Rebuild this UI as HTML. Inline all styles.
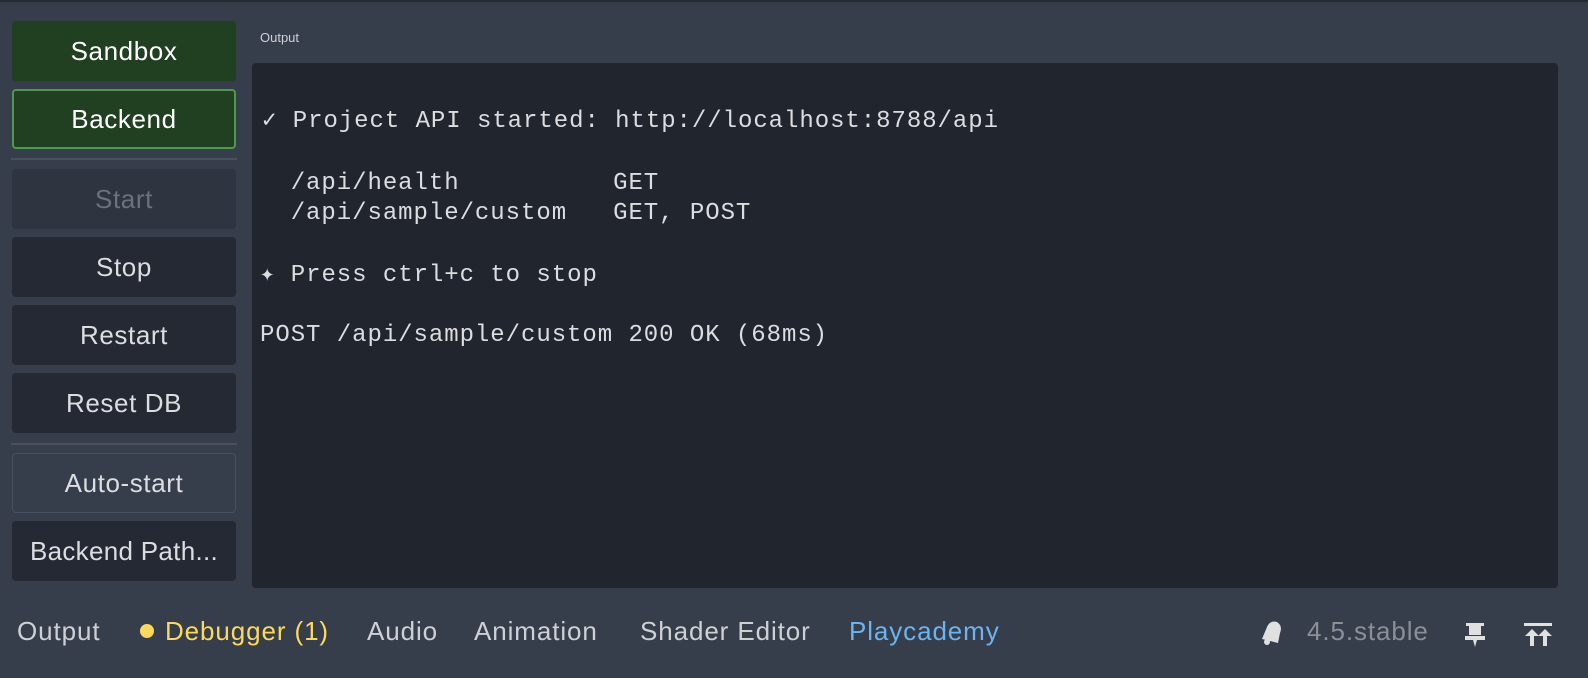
<!DOCTYPE html>
<html><head><meta charset="utf-8"><style>
*{margin:0;padding:0;box-sizing:border-box}
body{width:1588px;height:678px;background:#363d4b;font-family:"Liberation Sans",sans-serif;position:relative;overflow:hidden}
.top{position:absolute;left:0;top:0;width:1588px;height:2px;background:#262a33}
.btn{position:absolute;left:12px;width:224px;height:60px;border-radius:4px;background:#242933;color:#dcdde0;font-size:26px;letter-spacing:0.6px;display:flex;align-items:center;justify-content:center}
.g{background:#213f21;color:#fff}
.sep{position:absolute;left:11px;width:226px;height:2px;background:#4a505c}
.out{position:absolute;left:252px;top:63px;width:1306px;height:525px;background:#21252e;border-radius:4px}
.mono{position:absolute;font-family:"Liberation Mono",monospace;font-size:24px;letter-spacing:0.95px;color:#dcdde0;white-space:pre;line-height:30px}
.tab{position:absolute;top:616px;font-size:26px;letter-spacing:0.9px;color:#cfd0d4;white-space:nowrap}
</style></head><body>
<div class="top"></div>
<div class="btn g" style="top:21px">Sandbox</div>
<div class="btn g" style="top:89px;border:2px solid #4f9a4a">Backend</div>
<div class="sep" style="top:158px"></div>
<div class="btn" style="top:169px;background:#2f3441;color:#6d717a">Start</div>
<div class="btn" style="top:237px">Stop</div>
<div class="btn" style="top:305px">Restart</div>
<div class="btn" style="top:373px">Reset DB</div>
<div class="sep" style="top:443px"></div>
<div class="btn" style="top:453px;background:#363d4b;border:1px solid #4a505c">Auto-start</div>
<div class="btn" style="top:521px;letter-spacing:0.3px">Backend Path...</div>
<div style="position:absolute;left:260px;top:30px;font-size:13px;color:#cfd0d4">Output</div>
<div class="out"></div>
<div class="mono" style="left:262px;top:107px">✓ Project API started: http://localhost:8788/api</div>
<div class="mono" style="left:260px;top:169px">  /api/health          GET
  /api/sample/custom   GET, POST</div>
<div class="mono" style="left:260px;top:261px">✦ Press ctrl+c to stop</div>
<div class="mono" style="left:260px;top:321px">POST /api/sample/custom 200 OK (68ms)</div>
<div class="tab" style="left:17px">Output</div>
<div style="position:absolute;left:140px;top:624px;width:14px;height:14px;border-radius:50%;background:#fcd95e"></div>
<div class="tab" style="left:165px;color:#fcd95e">Debugger (1)</div>
<div class="tab" style="left:367px">Audio</div>
<div class="tab" style="left:474px">Animation</div>
<div class="tab" style="left:640px">Shader Editor</div>
<div class="tab" style="left:849px;color:#6cb4f0">Playcademy</div>
<svg style="position:absolute;left:1258px;top:617px" width="28" height="30" viewBox="0 0 28 30"><path d="M4 22 L9 10 Q12 3 19 5 Q25 9 22 16 L20 26 Z" fill="#e0e0e0"/><circle cx="9" cy="25" r="3" fill="#e0e0e0"/></svg>
<div class="tab" style="left:1307px;color:#8c8f96">4.5.stable</div>
<svg style="position:absolute;left:1462px;top:623px" width="26" height="26" viewBox="0 0 26 26"><rect x="4" y="0" width="18" height="3" fill="#e0e0e0"/><rect x="7" y="3" width="12" height="9" fill="#e0e0e0"/><rect x="3" y="13" width="20" height="4" fill="#e0e0e0"/><path d="M11 17h4l-2 7z" fill="#e0e0e0"/></svg>
<svg style="position:absolute;left:1522px;top:623px" width="32" height="26" viewBox="0 0 32 26"><rect x="2" y="0" width="28" height="3" fill="#e0e0e0"/><path d="M10 6l-7 7h5v10h4V13h5z M23 6l-7 7h5v10h4V13h5z" fill="#e0e0e0"/></svg>
</body></html>
